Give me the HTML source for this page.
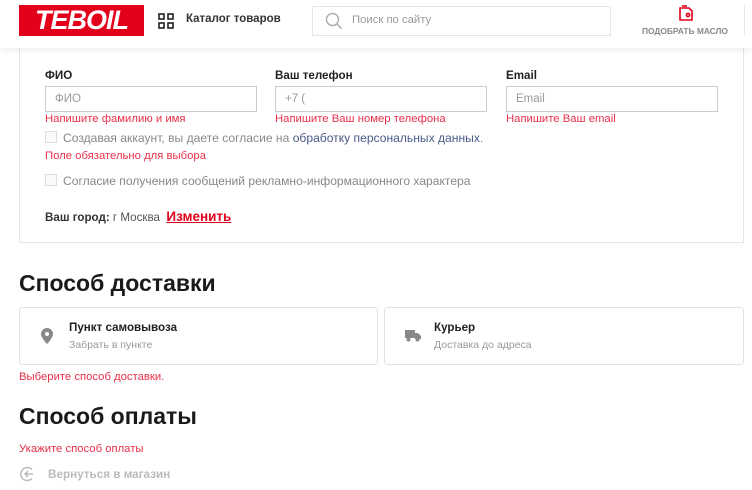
<!DOCTYPE html>
<html><head><meta charset="utf-8"><style>
*{box-sizing:border-box;margin:0;padding:0}
body{width:752px;height:490px;overflow:hidden;background:#fff;font-family:"Liberation Sans",sans-serif;position:relative;color:#222}
.a{position:absolute;white-space:nowrap}
.hdr{position:absolute;left:0;top:0;width:752px;height:48px;background:#fff;box-shadow:0 2px 6px rgba(0,0,0,.08);z-index:2}
.lbl{font-size:11.6px;font-weight:bold;color:#222}
.inp{position:absolute;height:26px;border:1px solid #ccc;font-size:11.5px;color:#999;padding:6px 9px}
.err{font-size:11.3px;color:#e8304a}
.cb{position:absolute;width:12px;height:12px;border:1px solid #ddd;background:#fafafa}
.gr{font-size:12.1px;color:#888}
.card{position:absolute;top:307px;height:58px;border:1px solid #e2e2e2;border-radius:3px}
h2{position:absolute;font-size:23px;font-weight:bold;color:#1a1a1a}
</style></head><body>
<div class="hdr">
 <div class="a" style="left:19px;top:5px;width:125px;height:31px;background:#e3001b;color:#fff;font-weight:bold;font-style:italic;font-size:27px;line-height:31px;text-align:center;letter-spacing:-1px">TEBOIL</div>
 <svg class="a" style="left:158px;top:13px" width="16" height="16" viewBox="0 0 16 16" fill="none" stroke="#222" stroke-width="1.6"><rect x="1" y="1" width="5" height="5"/><rect x="10" y="1" width="5" height="5"/><rect x="1" y="10" width="5" height="5"/><rect x="10" y="10" width="5" height="5"/></svg>
 <div class="a" style="left:186px;top:13px;font-size:11.5px;font-weight:bold;color:#333">Каталог товаров</div>
 <div class="a" style="left:312px;top:6px;width:299px;height:30px;border:1px solid #e5e5e5"></div>
 <svg class="a" style="left:325px;top:12px" width="18" height="18" viewBox="0 0 18 18" fill="none" stroke="#aaa" stroke-width="1.4"><circle cx="7.5" cy="7.5" r="6"/><path d="M12 12l4.5 4.5"/></svg>
 <div class="a" style="left:352px;top:14px;font-size:11.3px;color:#999">Поиск по сайту</div>
 <svg class="a" style="left:677px;top:4px" width="18" height="18" viewBox="0 0 18 18" fill="none" stroke="#e3001b" stroke-width="1.6"><path d="M3 4h9l3 3v9H3z"/><path d="M5 2h5"/><circle cx="11" cy="11" r="1.6"/></svg>
 <div class="a" style="left:642px;top:26px;font-size:8.4px;font-weight:bold;color:#888">ПОДОБРАТЬ МАСЛО</div>
 <div class="a" style="left:744px;top:5px;width:1px;height:30px;background:#e5e5e5"></div>
</div>
<div class="a" style="left:19px;top:40px;width:725px;height:203px;border:1px solid #e5e5e5;border-top:none"></div>
<div class="a lbl" style="left:45px;top:69px">ФИО</div>
<div class="a lbl" style="left:275px;top:69px">Ваш телефон</div>
<div class="a lbl" style="left:506px;top:69px">Email</div>
<div class="inp" style="left:45px;top:86px;width:212px">ФИО</div>
<div class="inp" style="left:275px;top:86px;width:212px">+7 (</div>
<div class="inp" style="left:506px;top:86px;width:212px">Email</div>
<div class="a err" style="left:45px;top:113px">Напишите фамилию и имя</div>
<div class="a err" style="left:275px;top:113px">Напишите Ваш номер телефона</div>
<div class="a err" style="left:506px;top:113px">Напишите Ваш email</div>
<div class="cb" style="left:45px;top:131px"></div>
<div class="a gr" style="left:63px;top:131px">Создавая аккаунт, вы даете согласие на <span style="color:#4a5a8a">обработку персональных данных</span>.</div>
<div class="a err" style="left:45px;top:150px">Поле обязательно для выбора</div>
<div class="cb" style="left:45px;top:174px"></div>
<div class="a gr" style="left:63px;top:174px">Согласие получения сообщений рекламно-информационного характера</div>
<div class="a" style="left:45px;top:209px;font-size:11.6px;color:#555"><b style="color:#333">Ваш город:</b> г Москва &nbsp;<span style="color:#e3001b;font-weight:bold;font-size:13.5px;text-decoration:underline">Изменить</span></div>
<h2 style="left:19px;top:270px">Способ доставки</h2>
<div class="card" style="left:19px;width:359px"></div>
<div class="card" style="left:384px;width:360px"></div>
<svg class="a" style="left:41px;top:328px" width="12" height="16" viewBox="0 0 12 16"><path d="M6 0C2.7 0 0 2.6 0 5.9 0 10 6 16 6 16s6-6 6-10.1C12 2.6 9.3 0 6 0z" fill="#888"/><circle cx="6" cy="6" r="2" fill="#fff"/></svg>
<div class="a" style="left:69px;top:321px;font-size:11.6px;font-weight:bold;color:#222">Пункт самовывоза</div>
<div class="a" style="left:69px;top:339px;font-size:10.5px;color:#999">Забрать в пункте</div>
<svg class="a" style="left:405px;top:329px" width="16" height="13" viewBox="0 0 16 13"><rect x="0" y="1" width="10" height="8" fill="#888"/><path d="M10 4h3l3 3v3h-6z" fill="#888"/><circle cx="3.5" cy="10.5" r="2" fill="#888"/><circle cx="12.5" cy="10.5" r="2" fill="#888"/></svg>
<div class="a" style="left:434px;top:321px;font-size:11.6px;font-weight:bold;color:#222">Курьер</div>
<div class="a" style="left:434px;top:339px;font-size:10.5px;color:#999">Доставка до адреса</div>
<div class="a err" style="left:19px;top:371px">Выберите способ доставки.</div>
<h2 style="left:19px;top:403px">Способ оплаты</h2>
<div class="a err" style="left:19px;top:443px">Укажите способ оплаты</div>
<svg class="a" style="left:20px;top:466px" width="16" height="16" viewBox="0 0 16 16" fill="none" stroke="#bbb" stroke-width="1.5"><path d="M12 3.5A6.5 6.5 0 1 0 12 12.5"/><path d="M13 8H5M8 5L5 8l3 3"/></svg>
<div class="a" style="left:48px;top:468px;font-size:11.7px;font-weight:bold;color:#bbb">Вернуться в магазин</div>
</body></html>
